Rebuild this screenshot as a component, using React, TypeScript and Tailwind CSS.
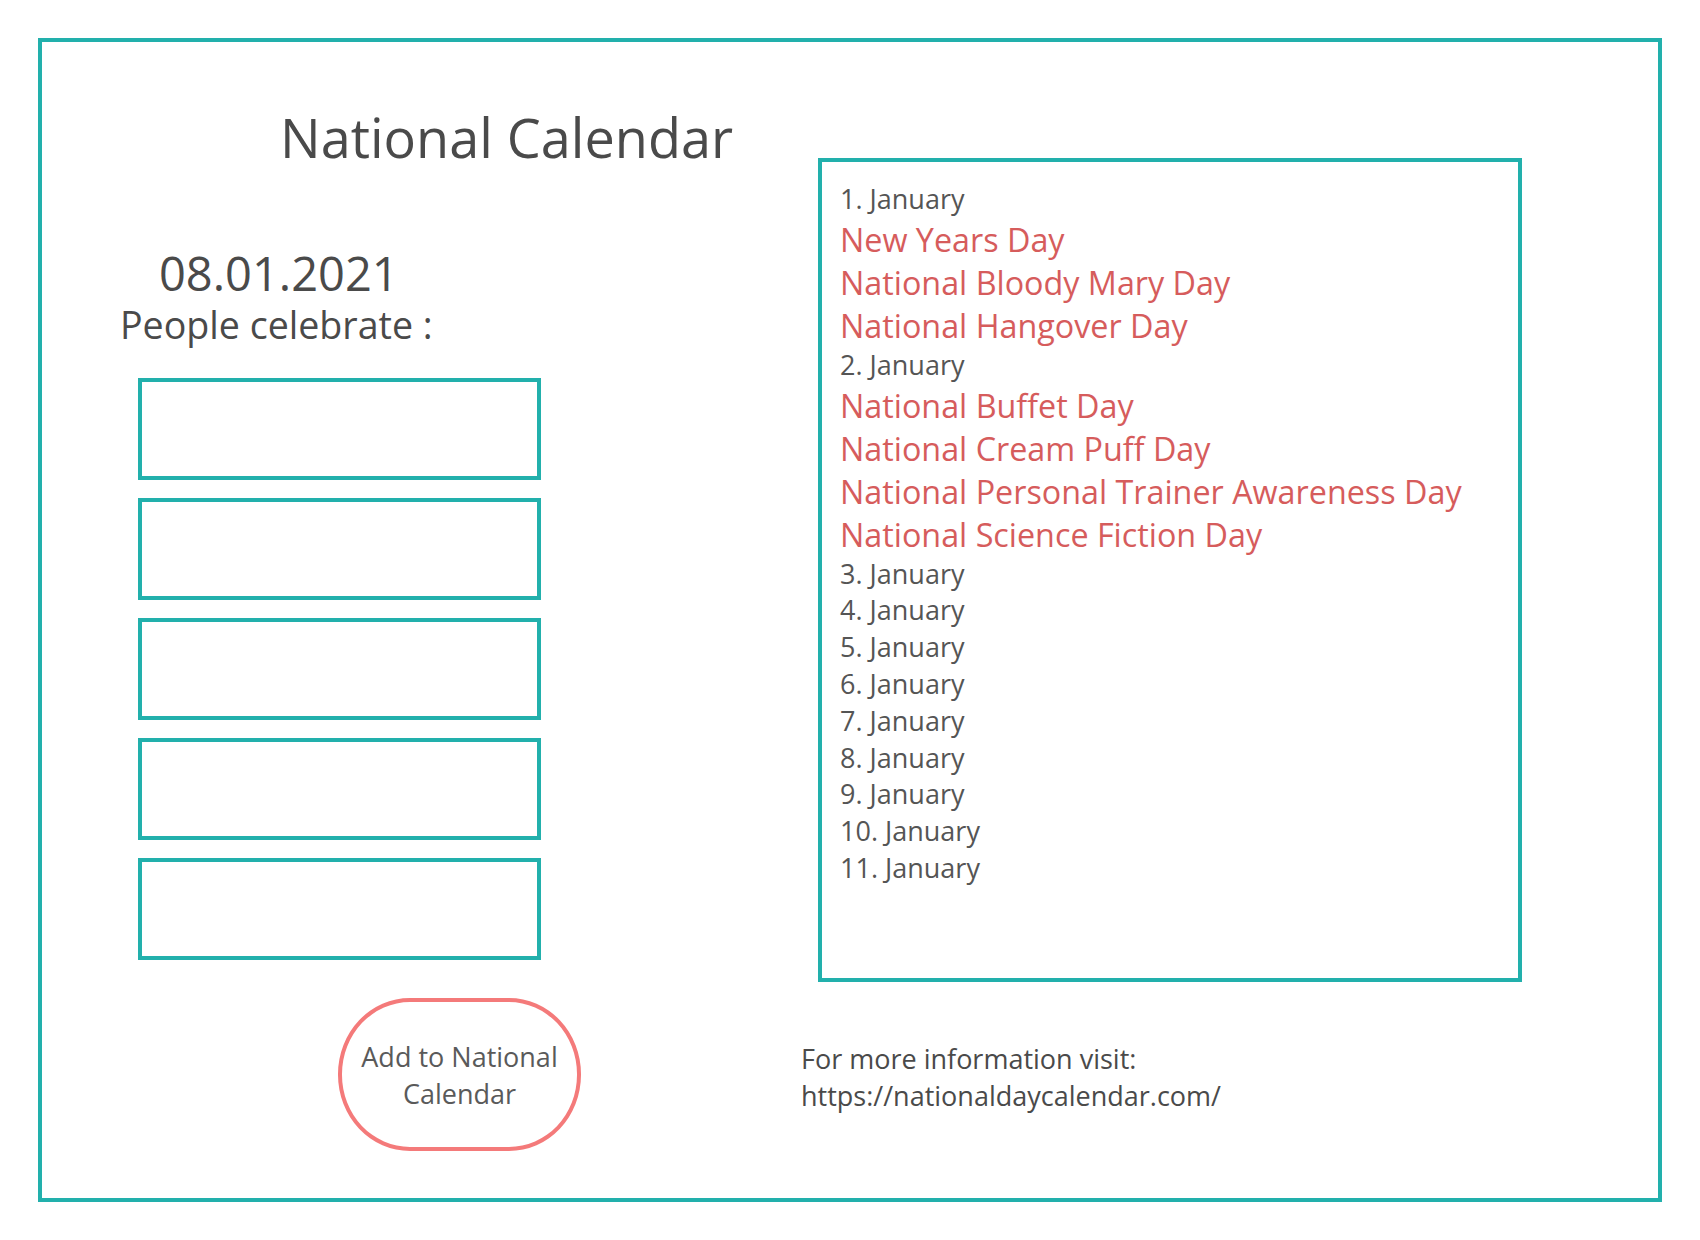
const days = [
  { label: "1. January", events: ["New Years Day", "National Bloody Mary Day", "National Hangover Day"] },
  {
    label: "2. January",
    events: [
      "National Buffet Day",
      "National Cream Puff Day",
      "National Personal Trainer Awareness Day",
      "National Science Fiction Day",
    ],
  },
  { label: "3. January", events: [] },
  { label: "4. January", events: [] },
  { label: "5. January", events: [] },
  { label: "6. January", events: [] },
  { label: "7. January", events: [] },
  { label: "8. January", events: [] },
  { label: "9. January", events: [] },
  { label: "10. January", events: [] },
  { label: "11. January", events: [] },
];

function DayList() {
  return (
    <div className="ml-[19px] mt-[116px] w-[704px] h-[824px] border-4 border-[#22b0ac] pl-[18px] pt-[19px]">
      {days.map((d) => (
        <div key={d.label}>
          <div className="text-[27px] leading-[36.8px] text-[#555555]">{d.label}</div>
          {d.events.map((e) => (
            <div key={e} className="text-[32.3px] leading-[43px] text-[#d65c5c]">
              {e}
            </div>
          ))}
        </div>
      ))}
    </div>
  );
}

export default function App() {
  return (
    <div className="w-[1700px] h-[1240px] bg-white pt-[38px] pl-[38px] font-['Open_Sans',sans-serif]">
      <div className="w-[1624px] h-[1164px] border-4 border-[#22b0ac] flex">
        <div className="w-[757px] flex flex-col items-start">
          <h1 className="mt-[68px] ml-[238px] text-[54px] leading-[54px] text-[#4a4a4a]">National Calendar</h1>
          <div className="mt-[86px] ml-[117px] text-[47px] leading-[47px] text-[#4a4a4a]">08.01.2021</div>
          <div className="mt-[9px] ml-[78px] text-[37.6px] leading-[38px] text-[#4a4a4a]">People celebrate :</div>

          <div className="mt-[34px] ml-[96px] flex flex-col gap-[18px]">
            {[0, 1, 2, 3, 4].map((i) => (
              <div key={i} className="w-[403px] h-[102px] border-4 border-[#22b0ac]" />
            ))}
          </div>

          <button className="mt-[38px] ml-[296px] w-[243px] h-[153px] border-4 border-[#f47a7a] rounded-[72px/76px] flex items-center justify-center text-center text-[27px] leading-[37px] text-[#5a5a5a]">
            Add to National
            <br />
            Calendar
          </button>
        </div>

        <div className="flex flex-col">
          <DayList />
          <div className="mt-[58px] ml-[2px] text-[27px] leading-[37px] text-[#4a4a4a]">
            <div>For more information visit:</div>
            <div>https://nationaldaycalendar.com/</div>
          </div>
        </div>
      </div>
    </div>
  );
}
